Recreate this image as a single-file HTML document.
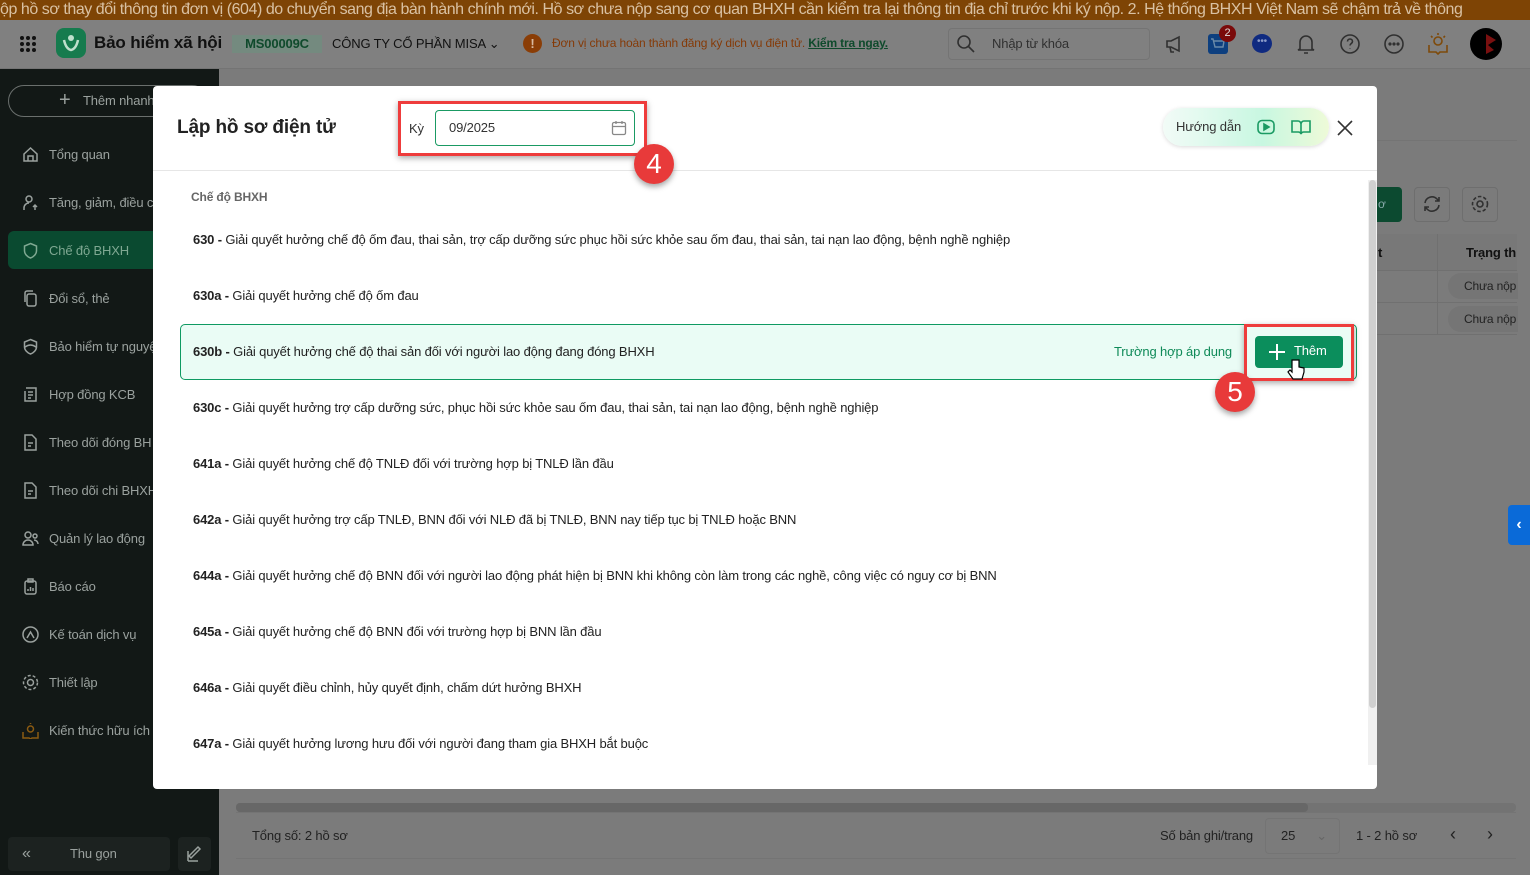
<!DOCTYPE html>
<html><head><meta charset="utf-8">
<style>
*{box-sizing:border-box;margin:0;padding:0}
body{width:1530px;height:875px;overflow:hidden;position:relative;font-family:"Liberation Sans","Noto Sans CJK SC",sans-serif;background:#7b7b7b;font-size:13px;color:#222;letter-spacing:-0.15px}
.abs{position:absolute}
.banner{left:0;top:0;width:1530px;height:20px;background:#7e4405;color:#d9c1a3;font-size:16px;line-height:20px;white-space:nowrap;overflow:hidden;letter-spacing:-0.45px}
.header{left:0;top:20px;width:1530px;height:49px;background:#808080;border-bottom:1px solid #747474}
.side{left:0;top:69px;width:219px;height:806px;background:#121816}
.nav{position:absolute;left:22px;color:#9aa19e;font-size:13px;display:flex;align-items:center;gap:10px}
.nav svg{width:17px;height:17px;stroke:#9aa19e;fill:none;stroke-width:1.5}
.modal{left:153px;top:86px;width:1224px;height:703px;background:#fff;border-radius:4px;overflow:hidden}
.row{position:absolute;left:40px;font-size:13px;color:#222}
.row b{font-weight:bold}
.red{border:3px solid #ee3c3c;position:absolute;box-shadow:0 2px 6px rgba(0,0,0,.35)}
.badge{position:absolute;width:40px;height:40px;border-radius:50%;background:#e83a3a;color:#fff;font-size:28px;text-align:center;line-height:40px;box-shadow:0 3px 6px rgba(0,0,0,.35);letter-spacing:0}
.ic{position:absolute;stroke:#303030;fill:none;stroke-width:1.6}
</style></head><body>
<div class="abs banner">ộp hồ sơ thay đổi thông tin đơn vị (604) do chuyển sang địa bàn hành chính mới. Hồ sơ chưa nộp sang cơ quan BHXH cần kiểm tra lại thông tin địa chỉ trước khi ký nộp. 2. Hệ thống BHXH Việt Nam sẽ chậm trả về thông</div>
<div class="abs header">
  <svg class="abs" style="left:19px;top:15px" width="18" height="18"><g fill="#111"><circle cx="3" cy="3" r="2"/><circle cx="9" cy="3" r="2"/><circle cx="15" cy="3" r="2"/><circle cx="3" cy="9" r="2"/><circle cx="9" cy="9" r="2"/><circle cx="15" cy="9" r="2"/><circle cx="3" cy="15" r="2"/><circle cx="9" cy="15" r="2"/><circle cx="15" cy="15" r="2"/></g></svg>
  <div class="abs" style="left:56px;top:8px;width:30px;height:30px;border-radius:8px;background:#167b4e"><svg width="30" height="30"><circle cx="15" cy="10" r="3" fill="#bfe0cd"/><path d="M8 12 Q10 21 15 22 Q20 21 22 12" stroke="#bfe0cd" stroke-width="2.5" fill="none"/></svg></div>
  <div class="abs" style="left:94px;top:13px;font-size:17px;font-weight:bold;color:#111">Bảo hiểm xã hội</div>
  <div class="abs" style="left:232px;top:15px;width:90px;height:18px;background:#748a7f;color:#0f4a2c;font-size:13px;font-weight:bold;text-align:center;line-height:18px">MS00009C</div>
  <div class="abs" style="left:332px;top:16px;font-size:13px;color:#111">CÔNG TY CỔ PHẦN MISA ⌄</div>
  <div class="abs" style="left:523px;top:14px;width:19px;height:19px;border-radius:50%;background:#8a3d06;color:#d8b9a0;font-weight:bold;text-align:center;line-height:19px">!</div>
  <div class="abs" style="left:552px;top:16px;font-size:12px;color:#853a07">Đơn vị chưa hoàn thành đăng ký dịch vụ điện tử. <b style="color:#0f4a2c;text-decoration:underline">Kiểm tra ngay.</b></div>
  <div class="abs" style="left:948px;top:8px;width:202px;height:32px;border:1px solid #747474;border-radius:4px;color:#303030;font-size:13px;line-height:30px;padding-left:43px">Nhập từ khóa</div>
  <svg class="ic" style="left:957px;top:15px" width="18" height="18"><circle cx="7" cy="7" r="6"/><path d="M11.5 11.5L17 17"/></svg>
  <svg class="ic" style="left:1165px;top:14px" width="20" height="20"><path d="M2 7h4l8-4v14l-8-4H2zM5 13l1 5h3"/></svg>
  <div class="abs" style="left:1208px;top:14px;width:20px;height:20px;border-radius:3px;background:#0d3f7f"><svg width="20" height="20" fill="none" stroke="#6a8aa8" stroke-width="1.4"><path d="M3 5h2l2 8h8l1-6H6"/></svg></div>
  <div class="abs" style="left:1219px;top:5px;width:17px;height:17px;border-radius:50%;background:#7a0a0a;color:#ddd;font-size:11px;text-align:center;line-height:17px">2</div>
  <div class="abs" style="left:1252px;top:14px;width:20px;height:19px;border-radius:50%;background:#0f2a80;color:#8a9ac8;font-size:10px;text-align:center;line-height:16px">•••</div>
  <svg class="ic" style="left:1296px;top:13px" width="20" height="22"><path d="M4 16V9a6 6 0 0112 0v7l2 1H2zM8 20h4"/></svg>
  <svg class="ic" style="left:1340px;top:14px" width="20" height="20"><circle cx="10" cy="10" r="9"/><path d="M7.5 7.5a2.5 2.5 0 115 0c0 2-2.5 2-2.5 4M10 14.5v.5"/></svg>
  <svg class="ic" style="left:1384px;top:14px" width="20" height="20"><circle cx="10" cy="10" r="9"/><circle cx="6" cy="10" r=".8" fill="#303030"/><circle cx="10" cy="10" r=".8" fill="#303030"/><circle cx="14" cy="10" r=".8" fill="#303030"/></svg>
  <svg class="abs" style="left:1427px;top:11px" width="22" height="24" fill="none" stroke="#7e4a0a" stroke-width="1.6"><circle cx="11" cy="10" r="4"/><path d="M11 2v2M4 5l1.5 1.5M18 5l-1.5 1.5M2 14v7h7l2 2 2-2h7v-7"/></svg>
  <div class="abs" style="left:1470px;top:8px;width:32px;height:32px;border-radius:50%;background:#000"><svg width="32" height="32"><path d="M16 6l10 6-8 5 6 5-8 4" fill="#7a1010"/></svg></div>
</div>
<div class="abs side">
  <div class="abs" style="left:8px;top:16px;width:200px;height:32px;border:1px solid #6a6f6d;border-radius:16px;color:#9aa19e;font-size:13px;line-height:30px;padding-left:52px"><span style="position:absolute;left:50px;top:-1px;font-size:20px">+</span><span style="margin-left:22px">Thêm nhanh</span></div>
  <div class="nav" style="top:77px"><svg><path d="M2 8l6.5-6 6.5 6v7H2zM6 15v-5h5v5"/></svg>Tổng quan</div>
  <div class="nav" style="top:125px"><svg><circle cx="7" cy="5" r="3"/><path d="M2 16v-2a5 5 0 015-5M13 16v-5M11 13l2-2 2 2"/></svg>Tăng, giảm, điều c</div>
  <div class="abs" style="left:8px;top:162px;width:211px;height:38px;background:#0a4a30;border-radius:6px 0 0 6px"></div>
  <div class="nav" style="top:173px;color:#7fa892"><svg style="stroke:#7fa892"><path d="M8.5 1.5l6 2.5v5c0 3-3 6-6 7-3-1-6-4-6-7V4z"/></svg>Chế độ BHXH</div>
  <div class="nav" style="top:221px"><svg><rect x="5" y="4" width="9" height="12" rx="2"/><path d="M3 12V3a2 2 0 012-2h6"/></svg>Đổi sổ, thẻ</div>
  <div class="nav" style="top:269px"><svg><path d="M8.5 1.5l6 2.5v5c0 3-3 6-6 7-3-1-6-4-6-7V4zM3 9q5.5-4 11 0"/></svg>Bảo hiểm tự nguyệ</div>
  <div class="nav" style="top:317px"><svg><path d="M4 2h10v13H3V5M6 6h5M6 9h5M6 12h3"/></svg>Hợp đồng KCB</div>
  <div class="nav" style="top:365px"><svg><path d="M3 1h7l4 4v11H3zM6 9h5M6 12h3"/></svg>Theo dõi đóng BH</div>
  <div class="nav" style="top:413px"><svg><path d="M3 1h7l4 4v11H3zM6 9h5M6 12h3"/></svg>Theo dõi chi BHXH</div>
  <div class="nav" style="top:461px"><svg><circle cx="6" cy="5" r="3"/><circle cx="13" cy="6" r="2"/><path d="M1 15a5 5 0 0110 0zM12 10a4 4 0 014 4"/></svg>Quản lý lao động</div>
  <div class="nav" style="top:509px"><svg><rect x="3" y="3" width="11" height="13" rx="2"/><path d="M6 1h5v3H6zM6 13v-2M8.5 13V9M11 13v-3"/></svg>Báo cáo</div>
  <div class="nav" style="top:557px"><svg><circle cx="8.5" cy="8.5" r="7.5"/><path d="M5 12l3.5-6 3.5 6"/></svg>Kế toán dịch vụ</div>
  <div class="nav" style="top:605px"><svg><circle cx="8.5" cy="8.5" r="3"/><circle cx="8.5" cy="8.5" r="7" stroke-dasharray="3 2"/></svg>Thiết lập</div>
  <div class="nav" style="top:653px;color:#9aa19e"><svg style="stroke:#8a5a12"><circle cx="8.5" cy="7" r="3"/><path d="M1 10v6h6l1.5 1 1.5-1h6v-6M8.5 1v1"/></svg>Kiến thức hữu ích</div>
  <div class="abs" style="left:8px;top:768px;width:162px;height:34px;background:#1c2220;border-radius:4px;color:#9aa19e;line-height:34px"><span style="position:absolute;left:14px;font-size:16px">«</span><span style="position:absolute;left:62px">Thu gọn</span></div>
  <div class="abs" style="left:178px;top:768px;width:33px;height:34px;background:#1c2220;border-radius:4px"><svg width="33" height="34" fill="none" stroke="#9aa19e" stroke-width="1.5"><path d="M10 24V14M10 24h10M13 21l9-9-2-2-9 9z"/></svg></div>
</div>
<div class="abs" style="left:1377px;top:140px;width:140px;height:1px;background:#747474"></div>
<div class="abs" style="left:1370px;top:187px;width:32px;height:35px;background:#0c4a30;border-radius:0 4px 4px 0;color:#8aa;font-size:12px;line-height:35px;padding-left:8px">ơ</div>
<div class="abs" style="left:1414px;top:187px;width:36px;height:35px;border:1px solid #6e6e6e;border-radius:4px"></div>
<svg class="ic" style="left:1422px;top:194px" width="20" height="20"><path d="M3 9a7 7 0 0112-4l2 2M17 11a7 7 0 01-12 4l-2-2M17 3v4h-4M3 17v-4h4"/></svg>
<div class="abs" style="left:1462px;top:187px;width:36px;height:35px;border:1px solid #6e6e6e;border-radius:4px"></div>
<svg class="ic" style="left:1470px;top:194px" width="20" height="20"><circle cx="10" cy="10" r="3"/><circle cx="10" cy="10" r="7.5" stroke-dasharray="3.5 2"/></svg>
<div class="abs" style="left:1377px;top:234px;width:140px;height:37px;background:#787878;border-bottom:1px solid #707070"></div>
<div class="abs" style="left:1437px;top:234px;width:1px;height:100px;background:#707070"></div>
<div class="abs" style="left:1378px;top:245px;font-weight:bold;color:#111">t</div>
<div class="abs" style="left:1466px;top:245px;font-weight:bold;color:#111">Trạng th</div>
<div class="abs" style="left:1448px;top:273px;width:70px;height:26px;border-radius:13px 0 0 13px;background:#757575;color:#222;font-size:12px;line-height:26px;padding-left:16px">Chưa nộp</div>
<div class="abs" style="left:1377px;top:302px;width:140px;height:1px;background:#707070"></div>
<div class="abs" style="left:1448px;top:306px;width:70px;height:26px;border-radius:13px 0 0 13px;background:#757575;color:#222;font-size:12px;line-height:26px;padding-left:16px">Chưa nộp</div>
<div class="abs" style="left:1377px;top:334px;width:140px;height:1px;background:#707070"></div>
<div class="abs" style="left:1508px;top:505px;width:22px;height:40px;background:#0a6ad8;border-radius:4px 0 0 4px;color:#fff;font-size:16px;line-height:40px;text-align:center;font-weight:bold">‹</div>
<div class="abs" style="left:236px;top:803px;width:1280px;height:9px;background:#737373;border-radius:4px"></div>
<div class="abs" style="left:236px;top:803px;width:1072px;height:9px;background:#676767;border-radius:4px"></div>
<div class="abs" style="left:236px;top:812px;width:1280px;height:1px;background:#747474"></div>
<div class="abs" style="left:236px;top:858px;width:1280px;height:1px;background:#747474"></div>
<div class="abs" style="left:252px;top:828px;color:#222;font-size:13px">Tổng số: 2 hồ sơ</div>
<div class="abs" style="left:1160px;top:828px;color:#222;font-size:13px">Số bản ghi/trang</div>
<div class="abs" style="left:1265px;top:818px;width:75px;height:36px;border:1px solid #747474;border-radius:4px;color:#222;line-height:34px;padding-left:15px">25<span style="position:absolute;right:12px;color:#666">⌄</span></div>
<div class="abs" style="left:1356px;top:828px;color:#222;font-size:13px">1 - 2 hồ sơ</div>
<div class="abs" style="left:1450px;top:824px;color:#222;font-size:18px">‹</div>
<div class="abs" style="left:1487px;top:824px;color:#222;font-size:18px">›</div>
<div class="abs modal">
  <div class="abs" style="left:24px;top:31px;font-size:19px;font-weight:bold;color:#222">Lập hồ sơ điện tử</div>
  <div class="abs" style="left:256px;top:35px;font-size:13px;color:#333">Kỳ</div>
  <div class="abs" style="left:282px;top:24px;width:200px;height:36px;border:1px solid #1a9a63;border-radius:4px;font-size:13px;color:#333;line-height:34px;padding-left:13px">09/2025</div>
  <svg class="abs" style="left:458px;top:34px" width="16" height="16" fill="none" stroke="#888" stroke-width="1.3"><rect x="1.5" y="2.5" width="13" height="12" rx="1.5"/><path d="M1.5 6.5h13M5 1v3M11 1v3"/></svg>
  <div class="abs" style="left:1010px;top:22px;width:166px;height:38px;border-radius:19px;background:linear-gradient(90deg,#f2fbf7,#c8f7e1 60%,#eefad8);box-shadow:0 1px 4px rgba(0,0,0,.15);font-size:13px;color:#333;line-height:38px;padding-left:13px">Hướng dẫn</div>
  <svg class="abs" style="left:1104px;top:33px" width="18" height="16" fill="none" stroke="#1a9a63" stroke-width="1.6"><rect x="1" y="1.5" width="16" height="13" rx="4"/><path d="M7 5v6l5-3z" fill="#1a9a63"/></svg>
  <svg class="abs" style="left:1138px;top:33px" width="20" height="16" fill="none" stroke="#1a9a63" stroke-width="1.6"><path d="M1 2h6a3 3 0 013 3v10a3 3 0 00-3-2H1zM19 2h-6a3 3 0 00-3 3v10a3 3 0 013-2h6z"/></svg>
  <svg class="abs" style="left:1184px;top:34px" width="16" height="16" stroke="#333" stroke-width="1.6"><path d="M1 1l14 14M15 1L1 15"/></svg>
  <div class="abs" style="left:0;top:84px;width:1224px;height:1px;background:#e6e6e6"></div>
  <div class="abs" style="left:38px;top:104px;font-size:12px;font-weight:bold;color:#666">Chế độ BHXH</div>
  <div class="row" style="top:146px"><b>630 -</b> Giải quyết hưởng chế độ ốm đau, thai sản, trợ cấp dưỡng sức phục hồi sức khỏe sau ốm đau, thai sản, tai nạn lao động, bệnh nghề nghiệp</div>
  <div class="row" style="top:202px"><b>630a -</b> Giải quyết hưởng chế độ ốm đau</div>
  <div class="abs" style="left:27px;top:238px;width:1177px;height:56px;border:1px solid #0f9a62;border-radius:5px;background:#eafcf5"></div>
  <div class="row" style="top:258px"><b>630b -</b> Giải quyết hưởng chế độ thai sản đối với người lao động đang đóng BHXH</div>
  <div class="abs" style="left:961px;top:258px;font-size:13px;color:#0f8a58">Trường hợp áp dụng</div>
  <div class="row" style="top:314px"><b>630c -</b> Giải quyết hưởng trợ cấp dưỡng sức, phục hồi sức khỏe sau ốm đau, thai sản, tai nạn lao động, bệnh nghề nghiệp</div>
  <div class="row" style="top:370px"><b>641a -</b> Giải quyết hưởng chế độ TNLĐ đối với trường hợp bị TNLĐ lần đầu</div>
  <div class="row" style="top:426px"><b>642a -</b> Giải quyết hưởng trợ cấp TNLĐ, BNN đối với NLĐ đã bị TNLĐ, BNN nay tiếp tục bị TNLĐ hoặc BNN</div>
  <div class="row" style="top:482px"><b>644a -</b> Giải quyết hưởng chế độ BNN đối với người lao động phát hiện bị BNN khi không còn làm trong các nghề, công việc có nguy cơ bị BNN</div>
  <div class="row" style="top:538px"><b>645a -</b> Giải quyết hưởng chế độ BNN đối với trường hợp bị BNN lần đầu</div>
  <div class="row" style="top:594px"><b>646a -</b> Giải quyết điều chỉnh, hủy quyết định, chấm dứt hưởng BHXH</div>
  <div class="row" style="top:650px"><b>647a -</b> Giải quyết hưởng lương hưu đối với người đang tham gia BHXH bắt buộc</div>
  <div class="abs" style="left:1215px;top:94px;width:9px;height:585px;background:#f0f0f0"></div>
  <div class="abs" style="left:1216px;top:94px;width:7px;height:528px;background:#d0d0d0;border-radius:4px"></div>
</div>
<div class="red" style="left:398px;top:101px;width:249px;height:55px"></div>
<div class="badge" style="left:634px;top:144px">4</div>
<div class="red" style="left:1244px;top:324px;width:110px;height:57px"></div>
<div class="abs" style="left:1255px;top:336px;width:88px;height:32px;background:#0b8e5c;border-radius:4px;color:#fff;font-size:13px;line-height:30px;padding-left:39px">Thêm</div>
<svg class="abs" style="left:1268px;top:343px" width="18" height="18" stroke="#fff" stroke-width="2"><path d="M9 1v16M1 9h16"/></svg>
<svg class="abs" style="left:1287px;top:358px" width="20" height="24"><path d="M5 2v12l-2-2-2 2 5 7h9l2-7v-4l-5-1V2z" fill="#fff" stroke="#000" stroke-width="1.2"/></svg>
<div class="badge" style="left:1215px;top:372px">5</div>
</body></html>
